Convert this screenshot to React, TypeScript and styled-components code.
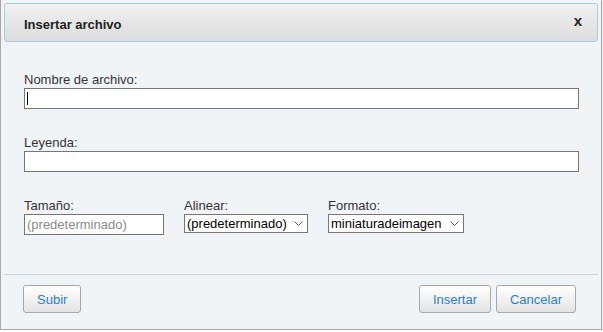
import React from "react";
import styled, { createGlobalStyle } from "styled-components";

const GlobalStyle = createGlobalStyle`
    html, body {
        margin: 0;
        padding: 0;
        background: #ffffff;
    }
    body {
        font-family: "Liberation Sans", Arial, sans-serif;
        font-size: 13px;
        color: #333;
    }
    * {
        box-sizing: border-box;
    }
`;

const App = () => {
    return (
        <>
            <GlobalStyle />
            <Dialog>
                <Header>
                    <Title>Insertar archivo</Title>
                    <CloseButton aria-label="Cerrar">x</CloseButton>
                </Header>
                <Body>
                    <Field>
                        <Label>Nombre de archivo:</Label>
                        <InputWrap>
                            <TextInput />
                            <Caret />
                        </InputWrap>
                    </Field>
                    <Field>
                        <Label>Leyenda:</Label>
                        <TextInput />
                    </Field>
                    <OptionsRow>
                        <Field>
                            <Label>Tamaño:</Label>
                            <TextInput $width={140} placeholder="(predeterminado)" />
                        </Field>
                        <Field>
                            <Label>Alinear:</Label>
                            <SelectBox $width={124}>
                                <Select defaultValue="default">
                                    <option value="default">(predeterminado)</option>
                                    <option value="left">Izquierda</option>
                                    <option value="center">Centro</option>
                                    <option value="right">Derecha</option>
                                </Select>
                                <Chevron />
                            </SelectBox>
                        </Field>
                        <Field>
                            <Label>Formato:</Label>
                            <SelectBox $width={136}>
                                <Select defaultValue="thumb">
                                    <option value="thumb">miniaturadeimagen</option>
                                    <option value="frame">marco</option>
                                    <option value="border">borde</option>
                                </Select>
                                <Chevron />
                            </SelectBox>
                        </Field>
                    </OptionsRow>
                </Body>
                <Footer>
                    <Button>Subir</Button>
                    <ButtonGroup>
                        <Button>Insertar</Button>
                        <Button>Cancelar</Button>
                    </ButtonGroup>
                </Footer>
            </Dialog>
        </>
    );
};

const Chevron = () => (
    <ChevronIcon width="9" height="5" viewBox="0 0 9 5">
        <path d="M0.5 0.5 L4.5 4.5 L8.5 0.5" fill="none" stroke="#555" strokeWidth="1" />
    </ChevronIcon>
);

const Dialog = styled.div`
    width: 602px;
    height: 330px;
    padding: 3px 3px 0;
    background: #f1f4f7;
    border: 1px solid #a6a6a6;
    border-top: none;
    box-shadow: 0 1px 2px rgba(0, 0, 0, 0.2);
    display: flex;
    flex-direction: column;
`;

const Header = styled.div`
    height: 39px;
    flex-shrink: 0;
    display: flex;
    align-items: center;
    justify-content: space-between;
    padding: 0 15px 0 19px;
    border: 1px solid #aacbe6;
    border-radius: 3px;
    background: linear-gradient(to bottom, #f1f1f1, #dcdcdc);
`;

const Title = styled.span`
    font-size: 13px;
    font-weight: bold;
    color: #222;
    padding-top: 3px;
`;

const CloseButton = styled.button`
    border: none;
    background: transparent;
    padding: 0;
    margin-top: -4px;
    font-family: "Liberation Sans", Arial, sans-serif;
    font-size: 15px;
    font-weight: bold;
    color: #222;
    cursor: pointer;
`;

const Body = styled.div`
    flex: 1;
    display: flex;
    flex-direction: column;
    gap: 26px;
    padding: 30px 19px 0 20px;
`;

const Field = styled.div`
    display: flex;
    flex-direction: column;
`;

const Label = styled.label`
    display: block;
    font-size: 13px;
    line-height: 15px;
    color: #333;
    margin-bottom: 1px;
`;

const InputWrap = styled.div`
    position: relative;
`;

const Caret = styled.span`
    position: absolute;
    left: 3px;
    top: 4px;
    width: 1px;
    height: 13px;
    background: #000;
`;

const TextInput = styled.input<{ $width?: number }>`
    display: block;
    width: ${(p) => (p.$width ? `${p.$width}px` : "100%")};
    height: 21px;
    margin: 0;
    padding: 0 2px;
    border: 1px solid #767676;
    background: #fff;
    font-family: "Liberation Sans", Arial, sans-serif;
    font-size: 13px;
    color: #000;
    outline: none;

    &::placeholder {
        color: #8a8a8a;
    }
`;

const OptionsRow = styled.div`
    display: flex;
    gap: 20px;
`;

const SelectBox = styled.div<{ $width: number }>`
    position: relative;
    width: ${(p) => p.$width}px;
    height: 19px;
`;

const Select = styled.select`
    width: 100%;
    height: 100%;
    margin: 0;
    padding: 0 18px 0 2px;
    appearance: none;
    border: 1px solid #767676;
    border-radius: 0;
    background: #fff;
    font-family: "Liberation Sans", Arial, sans-serif;
    font-size: 13px;
    color: #000;
    outline: none;
`;

const ChevronIcon = styled.svg`
    position: absolute;
    right: 5px;
    top: 7px;
    pointer-events: none;
`;

const Footer = styled.div`
    height: 55px;
    flex-shrink: 0;
    display: flex;
    align-items: flex-start;
    justify-content: space-between;
    padding: 10px 22px 0 19px;
    border-top: 1px solid #cfd3d6;
`;

const ButtonGroup = styled.div`
    display: flex;
    gap: 5px;
`;

const Button = styled.button`
    height: 28px;
    padding: 0 13px;
    border: 1px solid #a9a9a9;
    border-radius: 3px;
    background: linear-gradient(to bottom, #ffffff, #e4e4e4);
    font-family: "Liberation Sans", Arial, sans-serif;
    font-size: 13px;
    color: #2e7fc1;
    cursor: pointer;
`;

export default App;
